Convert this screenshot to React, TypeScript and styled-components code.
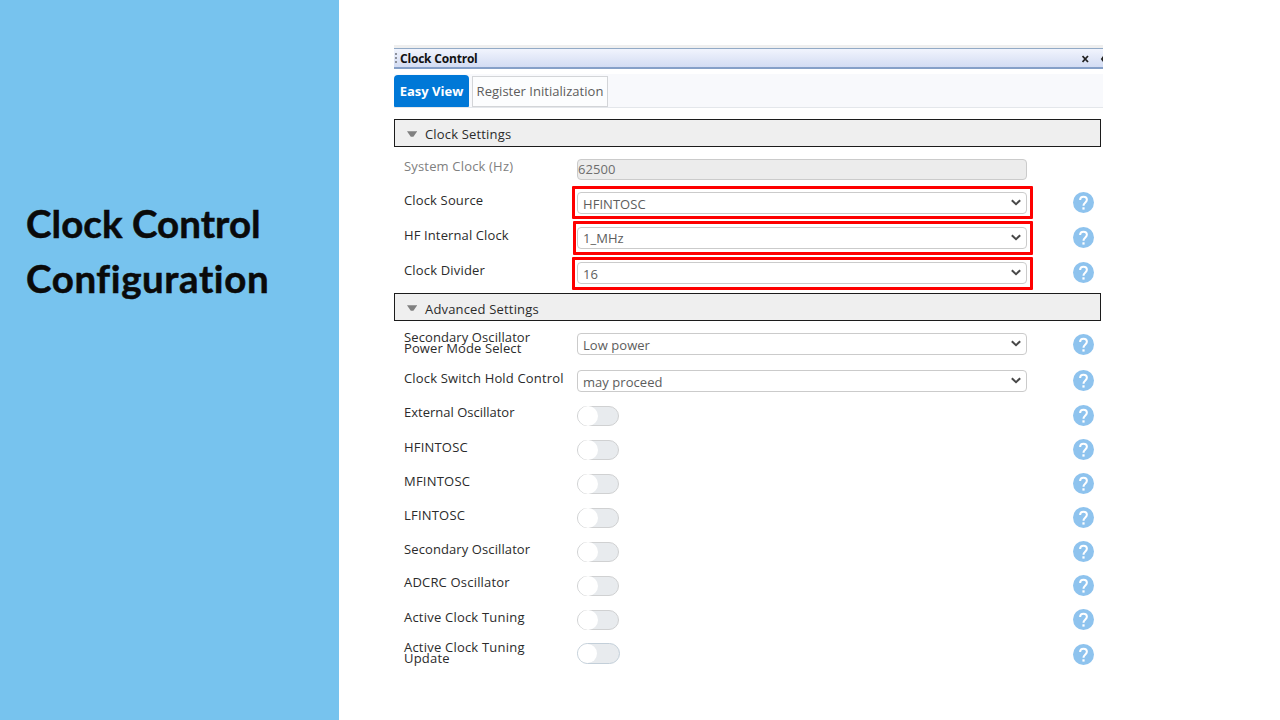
import React from "react";
import styled, { createGlobalStyle } from "styled-components";

const GlobalStyle = createGlobalStyle`
  * { box-sizing: border-box; }
  body { margin: 0; background: #fff; overflow: hidden; }
`;

const Slide = styled.div`
  display: flex;
  width: 1280px;
  height: 720px;
  font-family: "Open Sans", "Noto Sans", sans-serif;
  font-size: 13px;
  color: #2b2b2b;
  white-space: nowrap;
`;

const Sidebar = styled.aside`
  flex: none;
  width: 339px;
  background: #77c3ee;
  padding: 196px 0 0 26px;
`;

const Title = styled.h1`
  margin: 0;
  font: 700 38.5px/55px Lato, sans-serif;
  font-variant-ligatures: none;
  -webkit-text-stroke: 0.5px #0a0a0a;
  color: #0a0a0a;
`;

const TitleLine = styled.span<{ $spacing: number }>`
  display: block;
  letter-spacing: ${(p) => p.$spacing}px;
`;

const Panel = styled.main`
  width: 709px;
  margin: 45px 0 0 55px;
`;

const TitleBar = styled.header`
  display: flex;
  align-items: center;
  height: 24px;
  border-top: 3px solid #efefef;
  border-bottom: 2px solid #86a0c8;
  background: linear-gradient(#92aac6 0 1px, #f1f4fd 1px, #d3dcf3 100%);
  color: #111;
`;

const Grip = styled.span`
  width: 2px;
  height: 10px;
  margin: 1px 3px 0 1px;
  background: repeating-linear-gradient(#8d919c 0 2px, transparent 2px 4px);
`;

const BarTitle = styled.span`
  flex: 1;
  padding-top: 2px;
  font-weight: 700;
  font-size: 12px;
  letter-spacing: -0.2px;
`;

const BarIcon = styled.svg`
  display: block;
  margin-top: 2px;
`;

const Tabs = styled.nav`
  display: flex;
  align-items: flex-end;
  gap: 3px;
  height: 34px;
  margin-top: 5px;
  background: #f8f9fc;
  border-bottom: 1px solid #e4e7eb;
`;

const Tab = styled.div<{ $active?: boolean }>`
  display: flex;
  align-items: center;
  justify-content: center;
  width: ${(p) => (p.$active ? 75 : 136)}px;
  height: ${(p) => (p.$active ? 32 : 31)}px;
  padding-bottom: ${(p) => (p.$active ? 0 : 2)}px;
  background: ${(p) => (p.$active ? "#0078d7" : "#fcfdfe")};
  border: ${(p) => (p.$active ? "none" : "1px solid #d3d5d8")};
  border-radius: ${(p) => (p.$active ? "4px 4px 1px 1px" : "0")};
  color: ${(p) => (p.$active ? "#fff" : "#5c5c5c")};
  font-weight: ${(p) => (p.$active ? 700 : 400)};
  letter-spacing: ${(p) => (p.$active ? 0 : 0.03)}px;
`;

const SectionHeader = styled.div<{ $top?: number }>`
  display: flex;
  align-items: center;
  gap: 8px;
  width: 707px;
  height: 28px;
  margin-top: ${(p) => p.$top ?? 0}px;
  padding: 2px 0 0 12px;
  border: 1px solid #1c1c1c;
  background: #efefef;
`;

const SectionName = styled.span<{ $drop?: number }>`
  padding-top: ${(p) => p.$drop ?? 0}px;
  letter-spacing: 0.17px;
`;

const Rows = styled.div<{ $top: number }>`
  padding-top: ${(p) => p.$top}px;
`;

const Row = styled.div<{ $height: number }>`
  display: grid;
  grid-template-columns: 168px 501px 21px;
  align-items: start;
  height: ${(p) => p.$height}px;
  padding-left: 10px;
`;

const Label = styled.label<{ $top: number; $spacing: number; $muted?: boolean }>`
  margin-top: ${(p) => p.$top}px;
  line-height: 11px;
  white-space: pre;
  letter-spacing: ${(p) => p.$spacing}px;
  color: ${(p) => (p.$muted ? "#808080" : "#2b2b2b")};
`;

const ControlFrame = styled.div<{ $marked?: boolean; $width: number; $height: number; $inset: number }>`
  display: flex;
  align-items: flex-start;
  width: ${(p) => p.$width}px;
  height: ${(p) => p.$height}px;
  margin-left: ${(p) => (p.$marked ? 461 - p.$width : 0)}px;
  padding-top: ${(p) => p.$inset}px;
  padding-left: ${(p) => (p.$marked ? p.$width - 459 : 5)}px;
  border: ${(p) => (p.$marked ? "3px solid #fe0000" : "none")};
  border-radius: 1px;
`;

const Field = styled.div<{ $disabled?: boolean }>`
  display: flex;
  align-items: center;
  justify-content: space-between;
  flex: none;
  width: 450px;
  height: ${(p) => (p.$disabled ? 21 : 22)}px;
  padding: ${(p) => (p.$disabled ? "0 5px 0 0" : "1px 5px 0 5px")};
  border: 1px solid #cbcbcb;
  border-radius: 4px;
  background: ${(p) => (p.$disabled ? "#ececec" : "#fff")};
  color: ${(p) => (p.$disabled ? "#6e6e6e" : "#5d5d5d")};
  letter-spacing: 0.05px;
`;

const Value = styled.span<{ $lift?: number }>`
  padding-bottom: ${(p) => p.$lift ?? 0}px;
`;

const Arrow = styled.svg`
  display: block;
  margin-top: -2px;
`;

const ToggleCell = styled.div<{ $focus?: boolean }>`
  padding: ${(p) => (p.$focus ? 3 : 4)}px 0 0 5px;
`;

const Toggle = styled.div<{ $focus?: boolean }>`
  width: ${(p) => (p.$focus ? 43 : 42)}px;
  height: ${(p) => (p.$focus ? 21 : 20)}px;
  border: 1px solid ${(p) => (p.$focus ? "#c3cfd9" : "#d0d1d2")};
  border-radius: 11px;
  background: #e8ebee;

  &::before {
    content: "";
    display: block;
    width: ${(p) => (p.$focus ? 19 : 20)}px;
    height: ${(p) => (p.$focus ? 19 : 20)}px;
    margin-top: ${(p) => (p.$focus ? 0 : -1)}px;
    border-radius: 50%;
    background: #fff;
  }
`;

const HelpIcon = styled.svg<{ $top: number }>`
  display: block;
  margin-top: ${(p) => p.$top}px;
`;

function Help({ top }: { top: number }) {
  return (
    <HelpIcon $top={top} width="21" height="21" viewBox="0 0 21 21">
      <circle cx="10.5" cy="10.5" r="10.5" fill="#8ec3ee" />
      <path
        d="M7.1 8.1c0-2 1.4-3.4 3.4-3.4 2 0 3.4 1.3 3.4 3.1 0 2.6-3.4 2.8-3.4 6"
        fill="none"
        stroke="#fff"
        strokeWidth="2"
      />
      <rect x="9.4" y="15.3" width="2.2" height="2.3" fill="#fff" />
    </HelpIcon>
  );
}

function Chevron() {
  return (
    <Arrow width="10" height="7" viewBox="0 0 10 7">
      <path d="M0.8 1.2 L5 5.2 L9.2 1.2" fill="none" stroke="#484848" strokeWidth="2" />
    </Arrow>
  );
}

function Section({ name, top, drop }: { name: string; top?: number; drop?: number }) {
  return (
    <SectionHeader $top={top}>
      <svg width="10" height="7" viewBox="0 0 10 7">
        <path d="M0 0.3 H10.2 L6.4 5.8 H3.8 Z" fill="#808080" />
      </svg>
      <SectionName $drop={drop}>{name}</SectionName>
    </SectionHeader>
  );
}

type RowData = {
  label: string;
  spacing: number;
  height: number;
  labelTop: number;
  helpTop?: number;
  value?: string;
  lift?: number;
  frame?: { width: number; height: number; inset: number; marked?: boolean };
  disabled?: boolean;
  focus?: boolean;
};

const clockRows: RowData[] = [
  { label: "System Clock (Hz)", spacing: 0.17, height: 30, labelTop: 5, value: "62500", lift: 1, frame: { width: 460, height: 27, inset: 3 }, disabled: true },
  { label: "Clock Source", spacing: 0.15, height: 35, labelTop: 9, helpTop: 6, value: "HFINTOSC", frame: { width: 461, height: 33, inset: 3, marked: true } },
  { label: "HF Internal Clock", spacing: 0.12, height: 36, labelTop: 9, helpTop: 6, value: "1_MHz", lift: 2, frame: { width: 460, height: 34, inset: 3, marked: true } },
  { label: "Clock Divider", spacing: 0.17, height: 36, labelTop: 8, helpTop: 5, value: "16", frame: { width: 461, height: 33, inset: 2, marked: true } },
];

const advancedRows: RowData[] = [
  { label: "Secondary Oscillator\nPower Mode Select", spacing: 0.1, height: 38, labelTop: 2, helpTop: 4, value: "Low power", frame: { width: 460, height: 28, inset: 3 } },
  { label: "Clock Switch Hold Control", spacing: 0.17, height: 34, labelTop: 5, helpTop: 2, value: "may proceed", frame: { width: 460, height: 27, inset: 2 } },
  { label: "External Oscillator", spacing: 0, height: 34, labelTop: 5, helpTop: 3 },
  { label: "HFINTOSC", spacing: 0.2, height: 34, labelTop: 6, helpTop: 3 },
  { label: "MFINTOSC", spacing: 0.22, height: 34, labelTop: 6, helpTop: 3 },
  { label: "LFINTOSC", spacing: 0.2, height: 34, labelTop: 6, helpTop: 3 },
  { label: "Secondary Oscillator", spacing: 0.1, height: 34, labelTop: 6, helpTop: 3 },
  { label: "ADCRC Oscillator", spacing: 0.19, height: 34, labelTop: 5, helpTop: 3 },
  { label: "Active Clock Tuning", spacing: 0.21, height: 34, labelTop: 6, helpTop: 3 },
  { label: "Active Clock Tuning\nUpdate", spacing: 0.21, height: 34, labelTop: 2, helpTop: 4, focus: true },
];

function SettingRow({ row }: { row: RowData }) {
  return (
    <Row $height={row.height}>
      <Label $top={row.labelTop} $spacing={row.spacing} $muted={row.disabled}>
        {row.label}
      </Label>
      {row.frame ? (
        <ControlFrame
          $width={row.frame.width}
          $height={row.frame.height}
          $inset={row.frame.inset}
          $marked={row.frame.marked}
        >
          <Field $disabled={row.disabled}>
            <Value $lift={row.lift}>{row.value}</Value>
            {!row.disabled && <Chevron />}
          </Field>
        </ControlFrame>
      ) : (
        <ToggleCell $focus={row.focus}>
          <Toggle $focus={row.focus} />
        </ToggleCell>
      )}
      {row.helpTop !== undefined && <Help top={row.helpTop} />}
    </Row>
  );
}

export default function App() {
  return (
    <Slide>
      <GlobalStyle />
      <Sidebar>
        <Title>
          <TitleLine $spacing={0.05}>Clock Control</TitleLine>
          <TitleLine $spacing={0.6}>Configuration</TitleLine>
        </Title>
      </Sidebar>
      <Panel>
        <TitleBar>
          <Grip />
          <BarTitle>Clock Control</BarTitle>
          <BarIcon width="21" height="8" viewBox="0 0 21 8">
            <path d="M0.5 1 L6 7 M6 1 L0.5 7" stroke="#222" strokeWidth="1.8" />
            <path d="M21 1 L18.8 4 L21 7 Z" fill="#222" />
          </BarIcon>
        </TitleBar>
        <Tabs>
          <Tab $active>Easy View</Tab>
          <Tab>Register Initialization</Tab>
        </Tabs>
        <Section name="Clock Settings" top={11} />
        <Rows $top={9}>
          {clockRows.map((r) => (
            <SettingRow key={r.label} row={r} />
          ))}
        </Rows>
        <Section name="Advanced Settings" drop={2} />
        <Rows $top={9}>
          {advancedRows.map((r) => (
            <SettingRow key={r.label} row={r} />
          ))}
        </Rows>
      </Panel>
    </Slide>
  );
}
